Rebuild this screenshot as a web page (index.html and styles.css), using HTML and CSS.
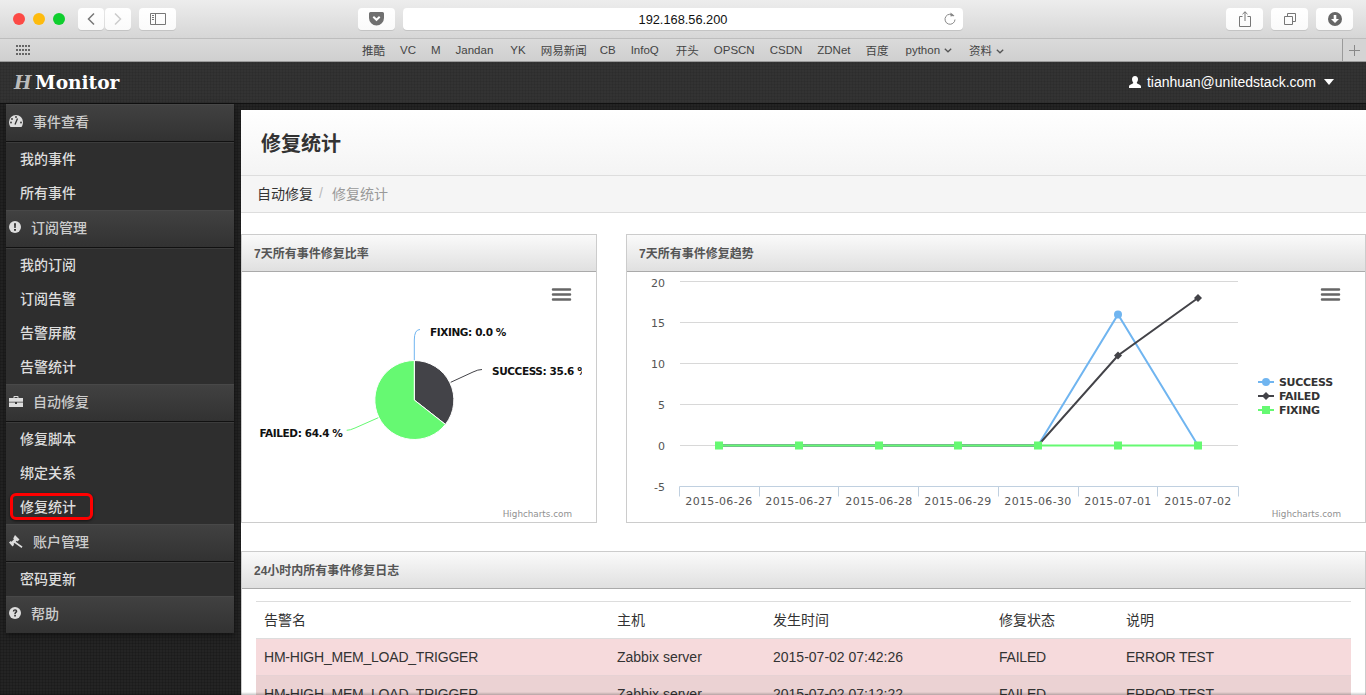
FILE: index.html
```html
<!DOCTYPE html>
<html lang="zh">
<head>
<meta charset="utf-8">
<title>HMonitor</title>
<link rel="stylesheet" href="styles.css">
</head>
<body>
<header class="toolbar">
  <div class="lights"><i class="light red"></i><i class="light yellow"></i><i class="light green"></i></div>
  <div class="btn-pair">
    <button class="tb-btn narrow"><svg width="10" height="14" viewBox="0 0 10 14"><path d="M8 1.5 2.5 7 8 12.5" fill="none" stroke="#777" stroke-width="1.5"/></svg></button>
    <button class="tb-btn narrow"><svg width="10" height="14" viewBox="0 0 10 14"><path d="M2 1.5 7.5 7 2 12.5" fill="none" stroke="#ccc" stroke-width="1.5"/></svg></button>
  </div>
  <button class="tb-btn wide side-btn"><svg width="16" height="12" viewBox="0 0 16 12"><path d="M.5.5h15v11H.5zM5.5.5v11" fill="none" stroke="#777"/><path d="M2 2.5h2M2 4.5h2M2 6.5h2" stroke="#777"/></svg></button>
  <button class="tb-btn wide pocket-btn"><svg width="15" height="14" viewBox="0 0 15 14"><path d="M1.5 0h12A1.5 1.5 0 0 1 15 1.5V6A7.500 7.500 0 0 1 0 6V1.500A1.500 1.500 0 0 1 1.500 0z" fill="#707070"/><path d="M4.300 4.800 7.500 7.800 10.700 4.800" fill="none" stroke="#fff" stroke-width="2"/></svg></button>
  <div class="url">
    <span class="url-text">192.168.56.200</span>
    <svg class="reload" width="12" height="13" viewBox="0 0 12 13"><path d="M9.800 4A5 5 0 1 0 11 7.500" fill="none" stroke="#888"/><path d="M6.500 .5 10.500 3.800 6.500 4.500z" fill="#888"/></svg>
  </div>
  <div class="tb-right">
    <button class="tb-btn wide"><svg width="12" height="16" viewBox="0 0 12 16"><path d="M3.500 5.500H.5v10h11v-10h-3M6 10V.8M3.500 3.200 6 .8l2.500 2.400" fill="none" stroke="#777"/></svg></button>
    <button class="tb-btn wide"><svg width="12" height="12" viewBox="0 0 12 12"><path d="M.5 3.500h8v8h-8zM3.500 3.500v-3h8v8h-3" fill="none" stroke="#777"/></svg></button>
    <button class="tb-btn wide"><svg width="14" height="14" viewBox="0 0 14 14"><circle cx="7" cy="7" r="7" fill="#666"/><path d="M5.700 3h2.600v4H11l-4 4-4-4h2.700z" fill="#fff"/></svg></button>
  </div>
</header>

<nav class="bookmarks">
  <svg class="grid-icon" width="15" height="10" viewBox="0 0 15 10"><g fill="#666"><rect x="0" y="0" width="2" height="2"/><rect x="3" y="0" width="2" height="2"/><rect x="6" y="0" width="2" height="2"/><rect x="9" y="0" width="2" height="2"/><rect x="12" y="0" width="2" height="2"/><rect x="0" y="4" width="2" height="2"/><rect x="3" y="4" width="2" height="2"/><rect x="6" y="4" width="2" height="2"/><rect x="9" y="4" width="2" height="2"/><rect x="12" y="4" width="2" height="2"/><rect x="0" y="8" width="2" height="2"/><rect x="3" y="8" width="2" height="2"/><rect x="6" y="8" width="2" height="2"/><rect x="9" y="8" width="2" height="2"/><rect x="12" y="8" width="2" height="2"/></g></svg>
  <div class="bm-list">
    <span class="bm-cjk">推酷</span><span>VC</span><span>M</span><span>Jandan</span><span class="bm-k">YK</span><span class="bm-cjk">网易新闻</span><span class="bm-cb">CB</span><span>InfoQ</span><span class="bm-k bm-cjk">开头</span><span>OPSCN</span><span>CSDN</span><span>ZDNet</span><span class="bm-cjk">百度</span><span class="bm-k">python<svg class="chev" width="8" height="5" viewBox="0 0 8 5"><path d="M.8.8 4 3.800 7.200.8" fill="none" stroke="#555" stroke-width="1.300"/></svg></span><span class="bm-k bm-cjk">资料<svg class="chev" width="8" height="5" viewBox="0 0 8 5"><path d="M.8.8 4 3.800 7.200.8" fill="none" stroke="#555" stroke-width="1.300"/></svg></span>
  </div>
  <div class="bm-plus"><svg width="11" height="11" viewBox="0 0 11 11"><path d="M5.500 0v11M0 5.500h11" stroke="#888"/></svg></div>
</nav>

<div class="navbar">
  <div class="brand"><em>H</em> Monitor</div>
  <div class="user">
    <svg width="12" height="12" viewBox="0 0 12 12"><path d="M6 0c2 0 3 1.500 3 3.300S8 6 7.700 7c.5 1 4.300 1.500 4.300 3.500V12H0v-1.500C0 8.500 3.800 8 4.300 7 4 6 3 5.100 3 3.300S4 0 6 0z" fill="#fff"/></svg>
    <span>tianhuan@unitedstack.com</span>
    <i class="caret"></i>
  </div>
</div>

<div class="layout">
  <aside class="sidebar">
    <div class="side-head"><svg class="side-ico" width="14" height="12" viewBox="0 0 14 12"><path d="M7 0a7 7 0 0 1 7 7c0 2-.6 3.600-1.500 5h-11C.6 10.600 0 9 0 7a7 7 0 0 1 7-7z" fill="#ddd"/><path d="M6 9.500 8.500 3.500" stroke="#333" stroke-width="1.300"/><circle cx="3" cy="4" r=".9" fill="#333"/><circle cx="2" cy="7.500" r=".9" fill="#333"/><circle cx="12" cy="7.500" r=".9" fill="#333"/><circle cx="7" cy="2" r=".9" fill="#333"/></svg><span class="lbl-wide">事件查看</span></div>
    <a class="side-item">我的事件</a>
    <a class="side-item">所有事件</a>
    <div class="side-head"><svg class="side-ico" width="12" height="12" viewBox="0 0 12 12"><circle cx="6" cy="6" r="6" fill="#ddd"/><path d="M5 2.300h2L6.700 7H5.300zM5 8h2v1.800H5z" fill="#333"/></svg><span class="lbl-narrow">订阅管理</span></div>
    <a class="side-item">我的订阅</a>
    <a class="side-item">订阅告警</a>
    <a class="side-item">告警屏蔽</a>
    <a class="side-item">告警统计</a>
    <div class="side-head"><svg class="side-ico" width="14" height="11" viewBox="0 0 14 11"><path d="M4.500 2V.8C4.500.3 4.800 0 5.300 0h3.400c.5 0 .8.300.8.800V2H14v3.800H0V2zM5.500 1v1h3V1zM0 6.500h6V8h2V6.500h6V11H0z" fill="#ddd"/></svg><span class="lbl-wide">自动修复</span></div>
    <a class="side-item">修复脚本</a>
    <a class="side-item">绑定关系</a>
    <a class="side-item">修复统计<span class="marker"></span></a>
    <div class="side-head"><svg class="side-ico" width="14" height="13" viewBox="0 0 14 13"><path d="M6 0 10.500 4.500 8.500 6.500 7.700 5.700 6.700 6.700 13.500 11.500 12.500 13 5.500 8 4.500 9 5.200 9.800 3.500 11.500 0 7.500 1.700 6 2.500 6.800 5 4.200 4.200 3.400z" fill="#ddd"/></svg><span class="lbl-wide">账户管理</span></div>
    <a class="side-item">密码更新</a>
    <div class="side-head last"><svg class="side-ico" width="12" height="12" viewBox="0 0 12 12"><circle cx="6" cy="6" r="6" fill="#ddd"/><path d="M3.800 4.500C3.900 3 4.900 2.300 6.100 2.300c1.300 0 2.200.8 2.200 1.900 0 1.500-1.600 1.500-1.500 2.800H5.300c-.1-1.800 1.300-1.900 1.300-2.700 0-.4-.2-.7-.6-.7s-.7.300-.7.900zM5.200 7.800h1.700v1.700H5.200z" fill="#333"/></svg><span class="lbl-narrow">帮助</span></div>
  </aside>

  <main class="main">
    <div class="page-head"><h1>修复统计</h1></div>
    <div class="crumbs"><span class="crumb-link">自动修复</span><span class="crumb-sep">/</span><span class="crumb-now">修复统计</span></div>

    <div class="charts">
      <section class="panel">
        <h2 class="panel-title">7天所有事件修复比率</h2>
        <svg class="chart" width="354" height="250" viewBox="0 0 354 250">
          <defs><clipPath id="pieclip"><rect x="0" y="0" width="340" height="250"/></clipPath></defs>
          <g class="menu-bars"><path d="M311 17.500h17M311 22.500h17M311 27.500h17"/></g>
          <path d="M172.300 128 172.300 88.500A39.500 39.500 0 0 1 203.400 152.400Z" fill="#434348" stroke="#fff"/>
          <path d="M172.300 128 203.400 152.400A39.500 39.500 0 1 1 172.300 88.500Z" fill="#66f972" stroke="#fff"/>
          <path d="M172.300 88V68Q172.300 57.500 178 57.500" fill="none" stroke="#70b5f0"/>
          <path d="M208.700 110.300 231 100Q236 97.500 240 97.500" fill="none" stroke="#434348"/>
          <path d="M136.300 145.700 113 156Q108 158.300 104.700 158.300" fill="none" stroke="#66f972"/>
          <g class="pie-label" clip-path="url(#pieclip)">
            <text x="188" y="64">FIXING: 0.0 %</text>
            <text x="250" y="103">SUCCESS: 35.6 %</text>
            <text x="17.500" y="165">FAILED: 64.4 %</text>
          </g>
          <text class="credit" x="330" y="245" text-anchor="end">Highcharts.com</text>
        </svg>
      </section>

      <section class="panel">
        <h2 class="panel-title">7天所有事件修复趋势</h2>
        <svg class="chart" width="738" height="250" viewBox="0 0 738 250">
          <g class="grid-lines"><path d="M53 9.500H611M53 50.500H611M53 91.500H611M53 132.500H611M53 173.500H611"/></g>
          <path class="axis" d="M52.500 214.500H611.500M52.500 214.500v10M132.500 214.500v10M211.500 214.500v10M291.500 214.500v10M371.500 214.500v10M451.500 214.500v10M530.500 214.500v10M611.500 214.500v10"/>
          <g class="y-labels" text-anchor="end">
            <text x="38" y="15">20</text><text x="38" y="55">15</text><text x="38" y="96">10</text><text x="38" y="137">5</text><text x="38" y="178">0</text><text x="38" y="219">-5</text>
          </g>
          <g class="x-labels" text-anchor="middle">
            <text x="92" y="233">2015-06-26</text><text x="172" y="233">2015-06-27</text><text x="252" y="233">2015-06-28</text><text x="331" y="233">2015-06-29</text><text x="411" y="233">2015-06-30</text><text x="491" y="233">2015-07-01</text><text x="571" y="233">2015-07-02</text>
          </g>
          <path d="M92 173.500H411L491 42.500 571 173.500" fill="none" stroke="#70b5f0" stroke-width="2"/>
          <circle cx="491" cy="42.500" r="4" fill="#70b5f0"/>
          <path d="M92 173.500H411L491 83.500 571 26" fill="none" stroke="#434348" stroke-width="2"/>
          <path d="M491 79.500l4 4-4 4-4-4zM571 22l4 4-4 4-4-4z" fill="#434348"/>
          <path d="M92 173.500H571" fill="none" stroke="#66f972" stroke-width="2"/>
          <g fill="#66f972"><rect x="88" y="169.500" width="8" height="8"/><rect x="168" y="169.500" width="8" height="8"/><rect x="248" y="169.500" width="8" height="8"/><rect x="327" y="169.500" width="8" height="8"/><rect x="407" y="169.500" width="8" height="8"/><rect x="487" y="169.500" width="8" height="8"/><rect x="567" y="169.500" width="8" height="8"/></g>
          <g class="menu-bars"><path d="M695 17.500h17M695 22.500h17M695 27.500h17"/></g>
          <path d="M631 110h16" stroke="#70b5f0" stroke-width="2"/><circle cx="639" cy="110" r="4" fill="#70b5f0"/>
          <path d="M631 124h16" stroke="#434348" stroke-width="2"/><path d="M639 120l4 4-4 4-4-4z" fill="#434348"/>
          <path d="M631 138h16" stroke="#66f972" stroke-width="2"/><rect x="635" y="134" width="8" height="8" fill="#66f972"/>
          <g class="legend"><text x="652" y="114">SUCCESS</text><text x="652" y="128">FAILED</text><text x="652" y="142">FIXING</text></g>
          <text class="credit" x="714" y="245" text-anchor="end">Highcharts.com</text>
        </svg>
      </section>
    </div>

    <section class="panel log">
      <h2 class="panel-title">24小时内所有事件修复日志</h2>
      <div class="log-body">
        <table class="log-table">
          <colgroup><col class="c1"><col class="c2"><col class="c3"><col class="c4"><col class="c5"></colgroup>
          <thead><tr><th>告警名</th><th>主机</th><th>发生时间</th><th>修复状态</th><th>说明</th></tr></thead>
          <tbody>
            <tr><td class="caps">HM-HIGH_MEM_LOAD_TRIGGER</td><td>Zabbix server</td><td>2015-07-02 07:42:26</td><td class="caps">FAILED</td><td class="caps">ERROR TEST</td></tr>
            <tr class="alt"><td class="caps">HM-HIGH_MEM_LOAD_TRIGGER</td><td>Zabbix server</td><td>2015-07-02 07:12:22</td><td class="caps">FAILED</td><td class="caps">ERROR TEST</td></tr>
          </tbody>
        </table>
      </div>
    </section>
  </main>
</div>
</body>
</html>
```
FILE: styles.css
```css
* { box-sizing: border-box; }
html, body { margin: 0; padding: 0; height: 695px; overflow: hidden; }
body {
  font-family: "Liberation Sans", "Noto Sans CJK SC", sans-serif;
  font-size: 14px;
  color: #333;
  background-color: #242424;
  background-image:
    repeating-linear-gradient(0deg, rgba(0,0,0,.14) 0 1px, transparent 1px 3px),
    repeating-linear-gradient(90deg, rgba(0,0,0,.14) 0 1px, transparent 1px 3px);
  display: flex;
  flex-direction: column;
}
/* Window's bottom edge shading over the page */
body::after {
  content: "";
  position: fixed;
  left: 0;
  right: 0;
  bottom: 0;
  height: 3px;
  background: linear-gradient(rgba(0,0,0,0), rgba(0,0,0,.22));
}

/* Browser toolbar */
.toolbar {
  height: 39px;
  flex: none;
  display: flex;
  align-items: flex-start;
  padding-top: 8px;
  background: linear-gradient(#ededed, #d6d6d6);
  border-bottom: 1px solid #bdbdbd;
}
.lights { display: flex; gap: 8px; margin: 5px 0 0 13px; }
.light { width: 12px; height: 12px; border-radius: 50%; display: block; }
.red { background: #fc4a46; }
.yellow { background: #fdbb0e; }
.green { background: #0fce2e; }
.tb-btn {
  height: 22px;
  border: 0;
  padding: 0;
  background: linear-gradient(#fff, #fafafa);
  border-radius: 4px;
  box-shadow: 0 1px 0 #c4c4c4;
  display: flex;
  align-items: center;
  justify-content: center;
}
.narrow { width: 26px; }
.wide { width: 37px; }
.btn-pair { display: flex; gap: 1px; margin-left: 13px; }
.side-btn { margin-left: 8px; }
.pocket-btn { margin-left: 182px; }
.url {
  width: 560px;
  height: 22px;
  margin-left: 8px;
  background: #fff;
  border-radius: 4px;
  box-shadow: 0 1px 0 #c4c4c4;
  position: relative;
  text-align: center;
  font-size: 12.8px;
  line-height: 23px;
  color: #111;
}
.reload { position: absolute; right: 7px; top: 4px; }
.tb-right { display: flex; gap: 8px; margin-left: 263px; }

/* Bookmarks bar */
.bookmarks {
  height: 23px;
  flex: none;
  display: flex;
  align-items: center;
  background: linear-gradient(#dadada, #cfcfcf);
  border-bottom: 1px solid #9a9a9a;
  font-size: 11.5px;
  color: #444;
}
.grid-icon { margin-left: 16px; }
.bm-list { display: flex; gap: 15px; margin-left: 331px; flex: 1; white-space: nowrap; padding-top: 1px; }
.bm-k { margin-left: 2px; }
.bm-cb { margin-left: -2px; }
.bm-cjk { margin-top: -2px; }
.chev { margin-left: 4px; vertical-align: 1px; }
.bm-plus {
  width: 24px;
  height: 22px;
  border-left: 1px solid #9a9a9a;
  display: flex;
  align-items: center;
  justify-content: center;
  background: #d4d4d4;
}

/* App navbar */
.navbar {
  height: 42px;
  flex: none;
  display: flex;
  align-items: center;
  justify-content: space-between;
  padding: 0 32px 2px 14px;
  background-color: #333;
  background-image:
    repeating-linear-gradient(0deg, rgba(0,0,0,.07) 0 1px, transparent 1px 3px),
    repeating-linear-gradient(90deg, rgba(0,0,0,.07) 0 1px, transparent 1px 3px);
  border-bottom: 1px solid #111;
}
.brand {
  font-family: "DejaVu Serif", serif;
  font-weight: 700;
  font-size: 18.6px;
  color: #fff;
  white-space: pre;
  word-spacing: -3px;
  line-height: 1;
  padding-top: 3px;
}
.brand em { color: #bbb; }
.user { display: flex; align-items: center; color: #fff; font-size: 14px; }
.user span { margin-left: 6px; }
.caret {
  width: 0;
  height: 0;
  margin-left: 8px;
  border-left: 5.5px solid transparent;
  border-right: 5.5px solid transparent;
  border-top: 6px solid #fff;
}

/* Layout */
.layout { flex: 1; display: flex; align-items: flex-start; min-height: 0; }

/* Sidebar */
.sidebar {
  width: 228px;
  margin-left: 6px;
  flex: none;
  background: #2e2e2e;
  display: flex;
  flex-direction: column;
  box-shadow: 0 2px 6px rgba(0,0,0,.5);
  font-weight: 500;
}
.side-head {
  height: 38px;
  display: flex;
  align-items: center;
  padding: 0 0 4px 3px;
  color: #ccc;
  background: linear-gradient(#414141, #323232);
  border-top: 1px solid #484848;
  border-bottom: 1px solid #111;
  box-shadow: 0 1px 0 #3c3c3c;
  position: relative;
}
.side-head.last { height: 37px; border-bottom: 0; box-shadow: none; }
.side-ico { flex: none; }
.lbl-wide { margin-left: 10px; }
.lbl-narrow { margin-left: 10px; }
.side-item {
  height: 34px;
  line-height: 35px;
  padding-left: 14px;
  color: #ddd;
  display: block;
  position: relative;
}
.marker {
  position: absolute;
  left: 4px;
  top: 3px;
  width: 83px;
  height: 27px;
  border: 3px solid #f00;
  border-radius: 6px;
  box-shadow: 0 1px 3px rgba(0,0,0,.6);
}

/* Main */
.main {
  width: 1125px;
  margin: 6px 0 0 7px;
  flex: none;
  height: 585px;
  overflow: hidden;
  background: #fff;
}
.page-head {
  height: 66px;
  display: flex;
  align-items: center;
  padding-left: 20px;
  background: linear-gradient(#fff, #f4f4f4);
  border-bottom: 1px solid #ddd;
}
.page-head h1 { margin: 0 0 1px; font-size: 20px; font-weight: 700; color: #333; }
.crumbs {
  height: 37px;
  display: flex;
  align-items: center;
  padding: 0 0 2px 16px;
  background: #f5f5f5;
  border-bottom: 1px solid #ddd;
}
.crumb-link { color: #333; }
.crumb-sep { color: #bbb; margin: 0 9px 0 6px; }
.crumb-now { color: #999; }
.charts {
  display: grid;
  grid-template-columns: 356px 740px;
  column-gap: 29px;
  margin-top: 21px;
}
.panel { border: 1px solid #ccc; background: #fff; }
.panel-title {
  margin: 0;
  height: 37px;
  line-height: 39px;
  padding-left: 12px;
  font-size: 12px;
  font-weight: 700;
  color: #555;
  background: linear-gradient(#fafafa, #e0e0e0);
  border-bottom: 1px solid #aaa;
}
.chart { display: block; }
.menu-bars path { fill: none; stroke: #666; stroke-width: 2.5; stroke-linecap: round; }
.grid-lines path { fill: none; stroke: #d8d8d8; }
.axis { fill: none; stroke: #c0d0e0; }
.pie-label text, .legend text {
  font-family: "DejaVu Sans", sans-serif;
  font-weight: 700;
  font-size: 10.5px;
  letter-spacing: -.4px;
  fill: #111;
}
.legend text { font-size: 11px; letter-spacing: -.3px; fill: #333; }
.y-labels text, .x-labels text {
  font-family: "DejaVu Sans", sans-serif;
  font-size: 11px;
  fill: #555;
}
.x-labels text { letter-spacing: .35px; }
.credit { font-family: "DejaVu Sans", sans-serif; font-size: 8.8px; fill: #909090; }

/* Log table */
.log { margin-top: 28px; }
.log-body { padding: 12px 14px 0; }
.log-table {
  width: 1095px;
  table-layout: fixed;
  border-collapse: collapse;
  border-top: 1px solid #ddd;
}
.c1 { width: 353px; }
.c2 { width: 156px; }
.c3 { width: 226px; }
.c4 { width: 127px; }
.c5 { width: 233px; }
.log-table th, .log-table td {
  height: 37px;
  padding: 0 8px;
  text-align: left;
  white-space: nowrap;
  font-weight: 400;
}
.log-table th { border-bottom: 1px solid #ddd; color: #333; padding-bottom: 2px; }
.log-table td { background: #f6dadc; border-bottom: 1px solid #e6d2d4; color: #333; }
.log-table .caps { letter-spacing: -.22px; }
.log-table .alt td { background: #ebd2d3; }
```
